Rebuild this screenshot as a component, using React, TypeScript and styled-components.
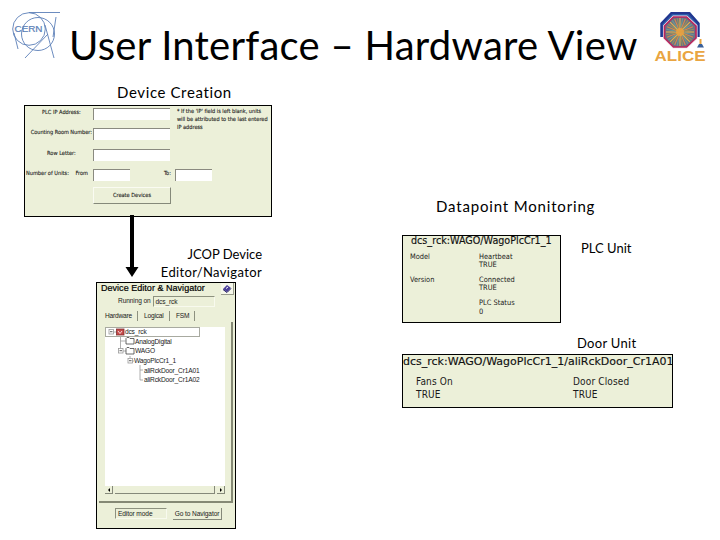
import React from 'react'
import styled, { createGlobalStyle } from 'styled-components'

const GlobalStyle = createGlobalStyle`
  * {
    box-sizing: border-box;
  }

  body {
    margin: 0;
    background: #fff;
    color: #000;
    font-family: Lato, 'Open Sans', sans-serif;
  }

  p, h1, h2 {
    margin: 0;
    white-space: nowrap;
  }

  svg {
    display: block;
    flex: none;
  }
`

const Slide = styled.main`
  width: 720px;
  height: 540px;
  overflow: hidden;
`

const Header = styled.header`
  display: flex;
  height: 80px;
  padding: 11px 12px 0 12px;
`

const Title = styled.h1`
  width: 592px;
  padding-left: 8px;
  padding-top: 8px;
  font-size: 40px;
  line-height: 52px;
  font-weight: 400;
  letter-spacing: 0.26px;
`

const Columns = styled.div`
  display: grid;
  grid-template-columns: 378px 1fr;
  padding-left: 24px;
`

const Column = styled.section`
  display: flex;
  flex-direction: column;
  align-items: flex-start;
`

const Caption = styled.h2<{ $indent?: number; $spacing?: number }>`
  padding-left: ${({ $indent }) => $indent || 0}px;
  font-size: 15px;
  line-height: 24px;
  font-weight: 400;
  letter-spacing: ${({ $spacing }) => $spacing || 0}px;
`

const SubCaption = styled.p<{ $spacing?: number }>`
  font-size: 13px;
  line-height: 18px;
  letter-spacing: ${({ $spacing }) => $spacing || 0}px;
`

const Panel = styled.div<{ $width: number; $height: number }>`
  width: ${({ $width }) => $width}px;
  height: ${({ $height }) => $height}px;
  border: 1px solid #000;
  background: #ecf0d9;
  color: #1a1a1a;
  font-family: 'DejaVu Sans', Verdana, sans-serif;
  font-stretch: condensed;
  overflow: hidden;
`

/* device creation form */

const FormPanel = styled(Panel)`
  display: flex;
  margin-top: 1px;
  padding-top: 2px;
  font-size: 5.6px;
  line-height: 8px;
  -webkit-text-stroke: 0.1px #1a1a1a;
`

const Form = styled.div`
  width: 147px;
`

const FormRow = styled.div`
  display: grid;
  grid-template-columns: 68px 77px;
  height: 20.3px;
  align-items: start;
`

const FormLabel = styled.p<{ $spacing?: number }>`
  text-align: center;
  letter-spacing: ${({ $spacing }) => $spacing || 0}px;
`

const Input = styled.div<{ $width: number }>`
  width: ${({ $width }) => $width}px;
  height: 12px;
  border-top: 1px solid #8a8a80;
  border-left: 1px solid #8a8a80;
  background: #fff;
`

const UnitsLabels = styled.div`
  display: flex;
  justify-content: space-between;
  padding: 0 5px 0 1px;
`

const CreateButton = styled.div`
  width: 78px;
  height: 17px;
  margin: -2px 0 0 68px;
  border: 1px solid #fafbf2;
  border-right-color: #85897a;
  border-bottom-color: #85897a;
  line-height: 15px;
  text-align: center;
`

const FormAside = styled.div`
  padding-left: 5px;
`

const Note = styled.div`
  height: 61px;
  margin-top: -1px;
  margin-bottom: 1px;
  letter-spacing: -0.02px;
`

const ToField = styled.div`
  display: flex;
  margin-left: -13px;
  gap: 4px;
`

/* connector and the navigator caption under the form */

const Connector = styled.div`
  display: flex;
  height: 67px;
  margin-top: -2px;
  padding-left: 101px;
`

const NavigatorCaption = styled.div`
  display: flex;
  flex-direction: column;
  width: 123px;
  padding-top: 30px;
  align-items: flex-end;
`

/* device editor & navigator */

const NavigatorPanel = styled(Panel)`
  margin-left: 72px;
  font-size: 6.6px;
  line-height: 10px;
  font-family: 'Liberation Sans', Arial, sans-serif;
  font-stretch: normal;
`

const NavigatorHead = styled.div`
  display: flex;
  justify-content: space-between;
  height: 13px;
  padding: 0 1px 0 4px;
`

const NavigatorTitle = styled.p`
  color: #000;
  font-size: 9px;
  line-height: 10px;
  letter-spacing: 0.03px;
  -webkit-text-stroke: 0.2px #000;
`

const HelpButton = styled.div`
  width: 13px;
  height: 12px;
  border-right: 1px solid #999c8c;
  border-bottom: 1px solid #999c8c;
  background: #f6f8ea;
`

const RunningOn = styled.div`
  display: flex;
  padding-left: 21px;
  gap: 2px;
  letter-spacing: -0.12px;
`

const Sunken = styled.div<{ $width: number }>`
  width: ${({ $width }) => $width}px;
  height: 11px;
  padding-left: 2px;
  border: 1px solid #8d917f;
  border-right-color: #f8faee;
  border-bottom-color: #f8faee;
  line-height: 9px;
`

const Tabs = styled.div`
  display: flex;
  padding: 4px 0 0 8px;
  letter-spacing: -0.2px;
`

const Tab = styled.p<{ $width: number }>`
  width: ${({ $width }) => $width}px;
  height: 10px;
  margin-right: 6px;
  border-right: 1px solid #8d917f;
`

const TabFrame = styled.div`
  width: 134px;
  height: 181px;
  margin: 1px 0 0 2px;
  padding: 5px 0 0 6px;
  border-right: 2px solid #858975;
  border-bottom: 2px solid #858975;
`

const Tree = styled.div`
  width: 120px;
  height: 159px;
  background: #fff;
  letter-spacing: -0.17px;
`

const TreeRow = styled.div<{ $selected?: boolean }>`
  display: flex;
  width: ${({ $selected }) => ($selected ? 95 : 119)}px;
  height: 9.6px;
  align-items: center;
  outline: ${({ $selected }) => ($selected ? '1px solid #a8aaa0' : 'none')};
  outline-offset: -1px;
  line-height: 9px;
`

const Scrollbar = styled.div`
  display: grid;
  grid-template-columns: 8px 100px 8px;
  width: 120px;
  height: 8px;
  gap: 2px;
`

const ScrollPart = styled.div`
  display: flex;
  align-items: center;
  justify-content: center;
  border-right: 1px solid #85897a;
  border-bottom: 1px solid #85897a;
`

const Footer = styled.div`
  display: flex;
  padding: 5px 0 0 18px;
  gap: 6px;
  letter-spacing: -0.1px;
`

const NavigatorButton = styled.div`
  width: 49px;
  height: 12px;
  border-right: 1px solid #85897a;
  border-bottom: 1px solid #85897a;
  line-height: 11px;
  text-align: center;
`

/* datapoint panels */

const MonitorRow = styled.div`
  display: flex;
  gap: 20px;
`

const PanelHeading = styled.p<{ $size: number; $spacing?: number }>`
  color: #111;
  font-size: ${({ $size }) => $size}px;
  font-stretch: normal;
  letter-spacing: ${({ $spacing }) => $spacing || 0}px;
  -webkit-text-stroke: 0.15px #111;
`

const PlcHeading = styled(PanelHeading)`
  margin-top: -3px;
  padding-left: 8px;
  line-height: 15px;
`

const DoorHeading = styled(PanelHeading)`
  line-height: 14px;
`

const PlcValues = styled.div`
  display: grid;
  grid-template-columns: 69px 1fr;
  grid-auto-rows: 23.2px;
  padding: 5px 0 0 7px;
  font-size: 7.4px;
  line-height: 8.2px;
`

const DoorValues = styled.div`
  display: grid;
  grid-template-columns: 157px 1fr;
  padding: 7px 0 0 13px;
  font-size: 10px;
  line-height: 12.5px;
  letter-spacing: 0.15px;
`

const CernLogo = () => (
  <svg width="49" height="49" viewBox="0 0 49 49" fill="none" stroke="#5b7fb8" strokeWidth="0.9">
    <circle cx="17" cy="18" r="16.3" />
    <circle cx="26" cy="23" r="16.5" />
    <path d="M17 1.5H48M44 6l-3 20M33 14l9 33M13 47l23-24M2 22l4 16" />
    <text x="2.5" y="20.5" fill="#5b7fb8" stroke="#5b7fb8" strokeWidth="0.2" fontFamily="Liberation Sans, sans-serif" fontSize="8.5" textLength="28" lengthAdjust="spacingAndGlyphs">CERN</text>
  </svg>
)

const rays = Array.from({ length: 32 }, (_, i) => (i * Math.PI) / 16)
const rayColors = ['#e9b14b', '#6d9a93', '#d8894d', '#97915c']

const AliceLogo = () => (
  <svg width="54" height="52" viewBox="0 0 54 52">
    <path d="M7.500 26V12L18 1h19l9.500 11v14z" fill="#2a5ba8" />
    <path d="M8.500 26V12.500L18.500 2H36l9.500 10.500V26" fill="none" stroke="#23358f" strokeWidth="2" />
    <path d="M20.500 6h13l9.500 9v12l-9.500 9h-13L11.500 27V15z" fill="#6b7385" stroke="#f6e4ee" strokeWidth="3" />
    <path d="M20.500 6h13l9.500 9v12l-9.500 9h-13L11.500 27V15z" fill="#6b7385" stroke="#b8265e" strokeWidth="1.700" />
    {rays.map((a, i) => (
      <path
        key={i}
        d={`M27 21L${27 + Math.cos(a) * 14} ${21 + Math.sin(a) * 14}`}
        stroke={rayColors[i % 4]}
        strokeWidth="1.100"
      />
    ))}
    <circle cx="27" cy="21" r="4" fill="#f0a33c" opacity="0.800" />
    <path d="M47.500 28v5" stroke="#e8a23d" strokeWidth="2" />
    <path d="M46 33h3l2 3.500h-7z" fill="#3a6099" />
    <text x="1.500" y="49.500" fill="#e9a541" fontFamily="Liberation Sans, sans-serif" fontWeight="700" fontSize="15.500" textLength="51" lengthAdjust="spacingAndGlyphs">ALICE</text>
  </svg>
)

const Arrow = () => (
  <svg width="14" height="63" viewBox="0 0 14 63">
    <path d="M5 0h4v52h4.500L7 62 .500 52H5z" />
  </svg>
)

const HelpIcon = () => (
  <svg width="12" height="11" viewBox="0 0 12 11">
    <path d="M2 6l4-4 4 3-4 4z" fill="#4b3f9a" />
    <path d="M2 6.500l4 3 4-4" fill="none" stroke="#221c66" />
    <path d="M5 5.500l2-1.500" stroke="#fff" />
  </svg>
)

interface BranchProps {
  width: number
  lines: string
  minus?: number
  folder?: number
  server?: boolean
}

const Branch = ({ width, lines, minus, folder, server }: BranchProps) => (
  <svg width={width} height="10" viewBox={`0 0 ${width} 10`} fill="none" stroke="#9a9a9a" strokeWidth="0.8">
    <path d={lines} />
    {minus !== undefined && (
      <>
        <rect x={minus} y="2.500" width="4.500" height="4.500" fill="#fff" />
        <path d={`M${minus + 1} 4.700h2.500`} stroke="#333" />
      </>
    )}
    {folder !== undefined && (
      <path d={`M${folder} 8V2.500l1-1h2l1 1h4V8z`} fill="#fff" stroke="#444" />
    )}
    {server && (
      <>
        <rect x="11.500" y="2" width="7.500" height="6" fill="#c64a4a" stroke="#7d3030" />
        <path d="M13 4l2 2.500L17 4" stroke="#fff" />
      </>
    )}
  </svg>
)

const treeRows = [
  { text: 'dcs_rck', width: 20, lines: 'M8 5h4', minus: 4, server: true, selected: true },
  { text: 'AnalogDigital', width: 30, lines: 'M15.500 0v10M15.500 5h5', folder: 21 },
  { text: 'WAGO', width: 30, lines: 'M15.500 0v5M18 5h3', minus: 13.5, folder: 21 },
  { text: 'WagoPlcCr1_1', width: 29, lines: 'M25 0v2M27 5h2', minus: 23 },
  { text: 'aliRckDoor_Cr1A01', width: 39, lines: 'M35 0v10M35 5h3' },
  { text: 'aliRckDoor_Cr1A02', width: 39, lines: 'M35 0v5h3' },
]

function DeviceForm() {
  return (
    <FormPanel $width={248} $height={112}>
      <Form>
        <FormRow>
          <FormLabel>&nbsp;&nbsp;&nbsp;PLC IP Address:</FormLabel>
          <Input $width={77} />
        </FormRow>
        <FormRow>
          <FormLabel $spacing={-0.05}>&nbsp;&nbsp;&nbsp;Counting Room Number:</FormLabel>
          <Input $width={77} />
        </FormRow>
        <FormRow>
          <FormLabel>&nbsp;&nbsp;&nbsp;Row Letter:</FormLabel>
          <Input $width={77} />
        </FormRow>
        <FormRow>
          <UnitsLabels>
            <FormLabel>Number of Units:</FormLabel>
            <FormLabel>From</FormLabel>
          </UnitsLabels>
          <Input $width={37} />
        </FormRow>
        <CreateButton>Create Devices</CreateButton>
      </Form>
      <FormAside>
        <Note>
          <p>* If the 'IP' field is left blank, units</p>
          <p>will be attributed to the last entered</p>
          <p>IP address</p>
        </Note>
        <ToField>
          <FormLabel>To:</FormLabel>
          <Input $width={37} />
        </ToField>
      </FormAside>
    </FormPanel>
  )
}

function Navigator() {
  return (
    <NavigatorPanel $width={140} $height={247}>
      <NavigatorHead>
        <NavigatorTitle>Device Editor &amp; Navigator</NavigatorTitle>
        <HelpButton>
          <HelpIcon />
        </HelpButton>
      </NavigatorHead>
      <RunningOn>
        <p>Running on</p>
        <Sunken $width={62}>dcs_rck</Sunken>
      </RunningOn>
      <Tabs>
        <Tab $width={33}>Hardware</Tab>
        <Tab $width={26}>Logical</Tab>
        <Tab $width={19}>FSM</Tab>
      </Tabs>
      <TabFrame>
        <Tree>
          {treeRows.map(({ text, selected, ...branch }) => (
            <TreeRow key={text} $selected={selected}>
              <Branch {...branch} />
              <p>{text}</p>
            </TreeRow>
          ))}
        </Tree>
        <Scrollbar>
          <ScrollPart>
            <svg width="4" height="4"><path d="M3 0v4L1 2z" /></svg>
          </ScrollPart>
          <ScrollPart />
          <ScrollPart>
            <svg width="4" height="4"><path d="M1 0v4l2-2z" /></svg>
          </ScrollPart>
        </Scrollbar>
      </TabFrame>
      <Footer>
        <Sunken $width={52}>Editor mode</Sunken>
        <NavigatorButton>Go to Navigator</NavigatorButton>
      </Footer>
    </NavigatorPanel>
  )
}

const DatapointColumn = styled(Column)`
  padding-top: 114px;
`

const PlcRow = styled(MonitorRow)`
  margin-top: 17px;
`

const PlcCaption = styled.div`
  padding-top: 4px;
`

const DoorCaption = styled.div`
  padding: 11px 0 2px 175px;
`

function App() {
  return (
    <>
      <GlobalStyle />
      <Slide>
        <Header>
          <CernLogo />
          <Title>User Interface – Hardware View</Title>
          <AliceLogo />
        </Header>
        <Columns>
          <Column>
            <Caption $indent={93} $spacing={0.62}>Device Creation</Caption>
            <DeviceForm />
            <Connector>
              <Arrow />
              <NavigatorCaption>
                <SubCaption>JCOP Device</SubCaption>
                <SubCaption $spacing={0.36}>Editor/Navigator</SubCaption>
              </NavigatorCaption>
            </Connector>
            <Navigator />
          </Column>
          <DatapointColumn>
            <Caption $indent={34} $spacing={0.83}>Datapoint Monitoring</Caption>
            <PlcRow>
              <Panel $width={159} $height={88}>
                <PlcHeading $size={9.6}>dcs_rck:WAGO/WagoPlcCr1_1</PlcHeading>
                <PlcValues>
                  <p>Model</p>
                  <div>
                    <p>Heartbeat</p>
                    <p>TRUE</p>
                  </div>
                  <p>Version</p>
                  <div>
                    <p>Connected</p>
                    <p>TRUE</p>
                  </div>
                  <span />
                  <div>
                    <p>PLC Status</p>
                    <p>0</p>
                  </div>
                </PlcValues>
              </Panel>
              <PlcCaption>
                <SubCaption>PLC Unit</SubCaption>
              </PlcCaption>
            </PlcRow>
            <DoorCaption>
              <SubCaption $spacing={0.3}>Door Unit</SubCaption>
            </DoorCaption>
            <Panel $width={271} $height={54}>
              <DoorHeading $size={11}>dcs_rck:WAGO/WagoPlcCr1_1/aliRckDoor_Cr1A01</DoorHeading>
              <DoorValues>
                <div>
                  <p>Fans On</p>
                  <p>TRUE</p>
                </div>
                <div>
                  <p>Door Closed</p>
                  <p>TRUE</p>
                </div>
              </DoorValues>
            </Panel>
          </DatapointColumn>
        </Columns>
      </Slide>
    </>
  )
}

export default App
